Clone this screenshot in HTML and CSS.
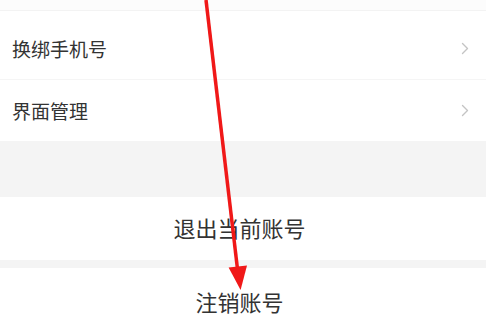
FILE: index.html
```html
<!DOCTYPE html>
<html lang="zh">
<head>
<meta charset="utf-8">
<link rel="stylesheet" href="styles.css">
</head>
<body>
<div class="page">
  <div class="top-strip"></div>
  <div class="list">
    <div class="row first">
      <span class="label">换绑手机号</span>
      <svg class="chev" width="8" height="13" viewBox="0 0 8 13"><path d="M1.5 1.5 L6.5 6.5 L1.5 11.5" fill="none" stroke="#c4c4c4" stroke-width="1.4" stroke-linecap="round" stroke-linejoin="round"/></svg>
    </div>
    <div class="row second">
      <span class="label">界面管理</span>
      <svg class="chev" width="8" height="13" viewBox="0 0 8 13"><path d="M1.5 1.5 L6.5 6.5 L1.5 11.5" fill="none" stroke="#c4c4c4" stroke-width="1.4" stroke-linecap="round" stroke-linejoin="round"/></svg>
    </div>
  </div>
  <div class="gap-big"></div>
  <div class="btn logout">退出当前账号</div>
  <div class="gap-small"></div>
  <div class="btn cancel">注销账号</div>
  <svg class="arrow" width="486" height="328" viewBox="0 0 486 328">
    <line x1="206" y1="0" x2="237.6" y2="270" stroke="#f01818" stroke-width="3.5"/>
    <polygon points="228.6,267.5 247,265.5 240.6,290" fill="#f01818"/>
  </svg>
</div>
</body>
</html>
```
FILE: styles.css
```css
* { box-sizing: border-box; }
html, body { margin: 0; padding: 0; background: #ffffff; }
body {
  font-family: "Noto Sans CJK SC", "Noto Sans", sans-serif;
  color: #333333;
}
.page {
  position: relative;
  width: 486px;
  height: 328px;
  overflow: hidden;
  display: flex;
  flex-direction: column;
}
.top-strip {
  height: 11px;
  background: #fcfcfc;
  border-bottom: 1px solid #f3f3f3;
  flex: none;
}
.list { display: flex; flex-direction: column; flex: none; }
.row {
  display: flex;
  align-items: center;
  justify-content: space-between;
  padding: 0 17px 0 12px;
  background: #ffffff;
}
.row.first { height: 69px; padding-top: 6px; border-bottom: 1px solid #f5f5f5; }
.row.second { height: 61px; }
.label { font-size: 19px; line-height: 1; letter-spacing: 0; }
.chev { display: block; }
.gap-big { height: 56px; background: #f4f4f4; flex: none; }
.gap-small { height: 8px; background: #f4f4f4; flex: none; }
.btn {
  display: flex;
  align-items: center;
  justify-content: center;
  font-size: 22px;
  line-height: 1;
  background: #ffffff;
  flex: none;
  padding-right: 7px;
}
.btn.logout { height: 63px; padding-bottom: 3px; }
.btn.cancel { height: 64px; padding-top: 1px; }
.arrow {
  position: absolute;
  left: 0;
  top: 0;
  pointer-events: none;
}
```
